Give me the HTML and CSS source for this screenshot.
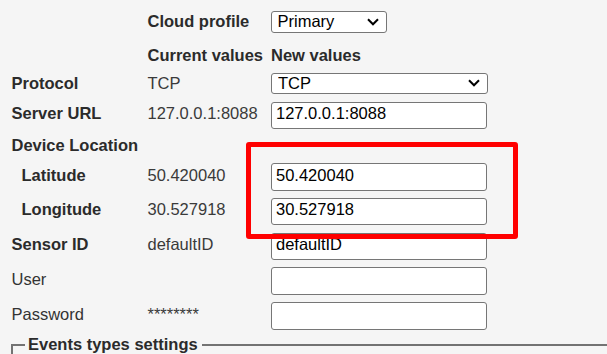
FILE: index.html
```html
<!DOCTYPE html>
<html lang="en">
<head>
  <meta charset="UTF-8" />
  <title>Cloud settings</title>
  <link rel="stylesheet" href="styles.css">
</head>
<body>

<div class="config">
  <span></span>
  <span class="head">Cloud profile</span>
  <span class="select profile">
    <select><option>Primary</option><option>Secondary</option></select>
    <svg class="chevron" width="12" height="8" viewBox="0 0 12 8"><path d="M1 1.3 L6 6.3 L11 1.3" /></svg>
  </span>

  <span></span>
  <span class="head">Current values</span>
  <span class="head">New values</span>

  <span class="label">Protocol</span>
  <span class="current">TCP</span>
  <span class="select wide">
    <select><option>TCP</option><option>UDP</option></select>
    <svg class="chevron" width="12" height="8" viewBox="0 0 12 8"><path d="M1 1.3 L6 6.3 L11 1.3" /></svg>
  </span>

  <span class="label">Server URL</span>
  <span class="current">127.0.0.1:8088</span>
  <input type="text" value="127.0.0.1:8088">

  <span class="label">Device Location</span>
  <span></span>
  <span></span>

  <span class="label sub">Latitude</span>
  <span class="current">50.420040</span>
  <input type="text" value="50.420040">

  <span class="label sub">Longitude</span>
  <span class="current">30.527918</span>
  <input type="text" value="30.527918">

  <span class="label">Sensor ID</span>
  <span class="current">defaultID</span>
  <input type="text" value="defaultID">

  <span class="label plain">User</span>
  <span class="current"></span>
  <input type="text" value="">

  <span class="label plain">Password</span>
  <span class="current">********</span>
  <input type="password" value="">
</div>

<fieldset class="events">
  <legend>Events types settings</legend>
</fieldset>

<!-- highlight around the location fields -->
<div class="highlight"></div>

</body>
</html>
```

FILE: styles.css
```css
body {
  margin: 0;
  background: #f5f5f5;
  font-family: "Liberation Sans", Arial, sans-serif;
  font-size: 16.5px;
  line-height: 19px;
  color: #333;
  overflow: hidden;
  position: relative;
  height: 354px;
}

.config {
  display: grid;
  grid-template-columns: 136.5px 123.5px 218px;
  grid-template-rows: 35px 27.2px 29px 34.1px 27.5px 34.6px 34.7px 34.7px 35px 28px;
  align-items: baseline;
  margin: 10.5px 0 0 11px;
}

.head,
.label {
  font-weight: bold;
  white-space: nowrap;
  color: #2b2b2b;
}

.label {
  padding-left: 0.5px;
}

.label.sub {
  padding-left: 10.5px;
}

.label.plain {
  font-weight: normal;
  color: #333;
}

.current {
  white-space: nowrap;
  color: #3a3a3a;
}

select,
input {
  font-family: "Liberation Sans", Arial, sans-serif;
  font-size: 16.5px;
  color: #000;
  box-sizing: border-box;
  margin: 0;
  border: 1px solid #767676;
  border-radius: 3px;
  background: #fff;
}

.select {
  position: relative;
  display: inline-block;
}

.select select {
  appearance: none;
  -webkit-appearance: none;
  width: 100%;
  padding: 0 24px 0 6px;
  line-height: 19px;
}

.select .chevron {
  position: absolute;
  right: 8px;
  top: 50%;
  margin-top: -4px;
  pointer-events: none;
}

.chevron path {
  fill: none;
  stroke: #000;
  stroke-width: 2;
}

.select.profile {
  width: 116px;
  margin-left: -0.5px;
}

.select.profile select {
  height: 22.6px;
}

.select.wide {
  width: 217.3px;
}

.select.wide select {
  height: 21.3px;
}

input {
  width: 216px;
  height: 27.6px;
  padding: 0 4px 4px;
}

.events {
  margin: 5.2px 0 0 11px;
  padding: 0 12px;
  width: 640px;
  height: 60px;
  border: 2px solid #737373;
}

.events legend {
  font-weight: bold;
  padding: 0 4px 0 3px;
  color: #2b2b2b;
}

.highlight {
  position: absolute;
  left: 246px;
  top: 142px;
  width: 272px;
  height: 97px;
  box-sizing: border-box;
  border: 5px solid #ff0000;
  border-radius: 3px;
  pointer-events: none;
}
```
